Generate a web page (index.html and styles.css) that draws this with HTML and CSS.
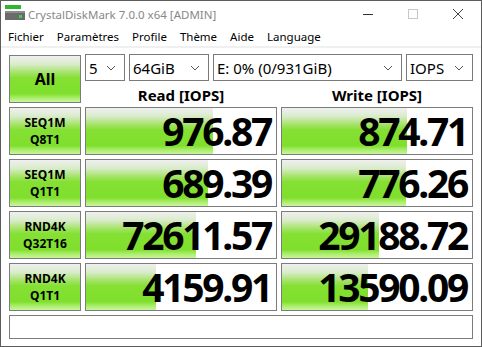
FILE: index.html
```html
<!DOCTYPE html>
<html lang="fr">
<head>
    <meta charset="UTF-8">
    <title>CrystalDiskMark 7.0.0 x64 [ADMIN]</title>
    <link rel="stylesheet" href="styles.css">
</head>
<body>
    <div class="window">
        <div class="titlebar">
            <svg class="app-icon" width="22" height="18" viewBox="0 0 22 18">
                <rect x="1" y="1" width="16" height="4" fill="#2fb52f"/>
                <rect x="1" y="7" width="20" height="9" fill="#6b6b6b"/>
                <rect x="1" y="7" width="20" height="2" fill="#8c8c8c"/>
                <rect x="15" y="11" width="3" height="3" fill="#3fd23f"/>
            </svg>
            <span class="title">CrystalDiskMark 7.0.0 x64 [ADMIN]</span>
            <div class="controls">
                <svg width="12" height="12" viewBox="0 0 12 12"><line x1="1" y1="6.5" x2="11" y2="6.5" stroke="#333" stroke-width="1"/></svg>
                <svg width="12" height="12" viewBox="0 0 12 12"><rect x="1.5" y="1.5" width="9" height="9" fill="none" stroke="#c8c8c8" stroke-width="1"/></svg>
                <svg width="12" height="12" viewBox="0 0 12 12"><path d="M1 1 L11 11 M11 1 L1 11" stroke="#444" stroke-width="1"/></svg>
            </div>
        </div>

        <div class="menubar">
            <span>Fichier</span>
            <span>Paramètres</span>
            <span>Profile</span>
            <span>Thème</span>
            <span>Aide</span>
            <span>Language</span>
        </div>

        <div class="client">
            <div class="grid">
                <button class="label all">All</button>

                <div class="top">
                    <div class="selects">
                        <div class="select s-count">5<svg class="chev" width="10" height="6" viewBox="0 0 10 6"><polyline points="1,1 5,5 9,1" fill="none" stroke="#555" stroke-width="1"/></svg></div>
                        <div class="select s-size">64GiB<svg class="chev" width="10" height="6" viewBox="0 0 10 6"><polyline points="1,1 5,5 9,1" fill="none" stroke="#555" stroke-width="1"/></svg></div>
                        <div class="select s-drive">E: 0% (0/931GiB)<svg class="chev" width="10" height="6" viewBox="0 0 10 6"><polyline points="1,1 5,5 9,1" fill="none" stroke="#555" stroke-width="1"/></svg></div>
                        <div class="select s-unit">IOPS<svg class="chev" width="10" height="6" viewBox="0 0 10 6"><polyline points="1,1 5,5 9,1" fill="none" stroke="#555" stroke-width="1"/></svg></div>
                    </div>
                    <div class="heads">
                        <div>Read [IOPS]</div>
                        <div>Write [IOPS]</div>
                    </div>
                </div>

                <button class="label">SEQ1M<br>Q8T1</button>
                <div class="cell"><div class="bar" style="width: 66.8%"></div><span class="value">976.87</span></div>
                <div class="cell"><div class="bar" style="width: 65.8%"></div><span class="value">874.71</span></div>

                <button class="label">SEQ1M<br>Q1T1</button>
                <div class="cell"><div class="bar" style="width: 64.2%"></div><span class="value">689.39</span></div>
                <div class="cell"><div class="bar" style="width: 65.3%"></div><span class="value">776.26</span></div>

                <button class="label">RND4K<br>Q32T16</button>
                <div class="cell"><div class="bar" style="width: 57.9%"></div><span class="value">72611.57</span></div>
                <div class="cell"><div class="bar" style="width: 51%"></div><span class="value">29188.72</span></div>

                <button class="label">RND4K<br>Q1T1</button>
                <div class="cell"><div class="bar" style="width: 36.8%"></div><span class="value">4159.91</span></div>
                <div class="cell"><div class="bar" style="width: 45.3%"></div><span class="value">13590.09</span></div>
            </div>

            <div class="comment"></div>
        </div>
    </div>
</body>
</html>
```

FILE: styles.css
```css
body {
    margin: 0;
    font-family: "Noto Sans", "Open Sans", sans-serif;
    background-color: #fff;
}

.window {
    width: 480px;
    height: 345px;
    border: 1px solid #5c5c5c;
    background-color: #fff;
    display: flex;
    flex-direction: column;
}

.titlebar {
    height: 26px;
    display: flex;
    align-items: center;
}

.app-icon {
    margin-left: 3px;
    margin-top: -2px;
}

.title {
    margin-left: 2px;
    font-size: 11.5px;
    color: #888;
}

.controls {
    margin-left: auto;
    display: flex;
    gap: 33px;
    padding-right: 17px;
}

.menubar {
    height: 19px;
    display: flex;
    align-items: center;
    gap: 13px;
    padding-left: 7px;
    font-size: 11.5px;
    color: #000;
    border-bottom: 2px solid #f0f0f0;
}

.client {
    padding: 6px 8px 0 8px;
}

.grid {
    display: grid;
    grid-template-columns: 72px 192px 192px;
    grid-template-rows: 49px repeat(4, 48px);
    column-gap: 4px;
    row-gap: 4px;
}

.label {
    margin: 0;
    padding: 0;
    border: 1px solid #7c7c7c;
    font-family: "Noto Sans", sans-serif;
    font-weight: bold;
    font-size: 12px;
    line-height: 17px;
    color: #000;
    background: linear-gradient(to bottom, #f0f0f0 0%, #d9eccb 18%, #9fe25e 38%, #84e032 48%, #80df2d 82%, #a6ec66 90%, #c9f59d 100%);
}

.label.all {
    margin-top: 1px;
    height: 48px;
    font-size: 16px;
}

.top {
    display: flex;
    flex-direction: column;
    grid-column: 2 / 4;
}

.selects {
    display: flex;
    gap: 4px;
    height: 27px;
}

.select {
    display: flex;
    align-items: center;
    box-sizing: border-box;
    height: 27px;
    padding-left: 3px;
    padding-right: 8px;
    border: 1px solid #7a7a7a;
    font-size: 15px;
    color: #000;
}

.chev {
    margin-left: auto;
}

.s-count { width: 40px; }
.s-size { width: 80px; }
.s-drive { width: 189px; }
.s-unit { width: 67px; }

.heads {
    display: grid;
    grid-template-columns: 192px 192px;
    column-gap: 4px;
    margin-top: 4px;
    line-height: 20px;
    font-size: 15px;
    font-weight: bold;
    text-align: center;
}

.cell {
    position: relative;
    border: 1px solid #7c7c7c;
    background-color: #fff;
    text-align: right;
}

.bar {
    position: absolute;
    left: 0;
    top: 0;
    bottom: 0;
    background: linear-gradient(to bottom, #f0f0f0 0%, #d9eccb 18%, #9fe25e 38%, #84e032 48%, #80df2d 82%, #a6ec66 90%, #c9f59d 100%);
}

.value {
    position: relative;
    display: block;
    padding-right: 5px;
    font-size: 39px;
    font-weight: bold;
    letter-spacing: -2.3px;
    line-height: 46px;
    color: #000;
}

.comment {
    margin-top: 4px;
    height: 24px;
    box-sizing: border-box;
    border: 1px solid #7c7c7c;
}
```
